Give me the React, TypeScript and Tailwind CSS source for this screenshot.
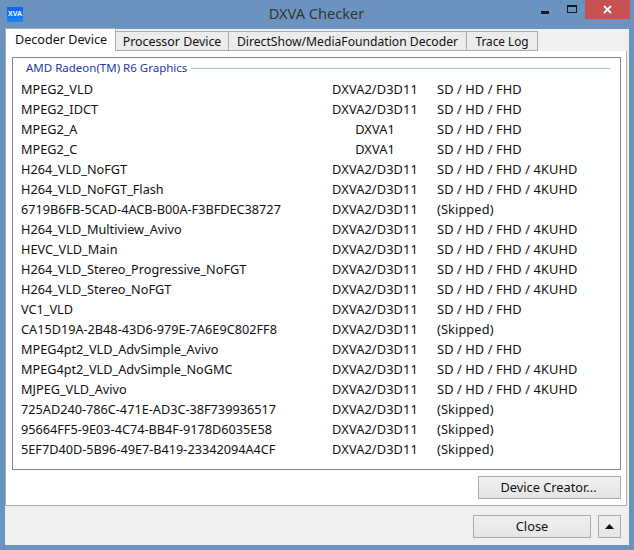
const rows: [string, string, string][] = [
  ["MPEG2_VLD", "DXVA2/D3D11", "SD / HD / FHD"],
  ["MPEG2_IDCT", "DXVA2/D3D11", "SD / HD / FHD"],
  ["MPEG2_A", "DXVA1", "SD / HD / FHD"],
  ["MPEG2_C", "DXVA1", "SD / HD / FHD"],
  ["H264_VLD_NoFGT", "DXVA2/D3D11", "SD / HD / FHD / 4KUHD"],
  ["H264_VLD_NoFGT_Flash", "DXVA2/D3D11", "SD / HD / FHD / 4KUHD"],
  ["6719B6FB-5CAD-4ACB-B00A-F3BFDEC38727", "DXVA2/D3D11", "(Skipped)"],
  ["H264_VLD_Multiview_Avivo", "DXVA2/D3D11", "SD / HD / FHD / 4KUHD"],
  ["HEVC_VLD_Main", "DXVA2/D3D11", "SD / HD / FHD / 4KUHD"],
  ["H264_VLD_Stereo_Progressive_NoFGT", "DXVA2/D3D11", "SD / HD / FHD / 4KUHD"],
  ["H264_VLD_Stereo_NoFGT", "DXVA2/D3D11", "SD / HD / FHD / 4KUHD"],
  ["VC1_VLD", "DXVA2/D3D11", "SD / HD / FHD"],
  ["CA15D19A-2B48-43D6-979E-7A6E9C802FF8", "DXVA2/D3D11", "(Skipped)"],
  ["MPEG4pt2_VLD_AdvSimple_Avivo", "DXVA2/D3D11", "SD / HD / FHD"],
  ["MPEG4pt2_VLD_AdvSimple_NoGMC", "DXVA2/D3D11", "SD / HD / FHD / 4KUHD"],
  ["MJPEG_VLD_Avivo", "DXVA2/D3D11", "SD / HD / FHD / 4KUHD"],
  ["725AD240-786C-471E-AD3C-38F739936517", "DXVA2/D3D11", "(Skipped)"],
  ["95664FF5-9E03-4C74-BB4F-9178D6035E58", "DXVA2/D3D11", "(Skipped)"],
  ["5EF7D40D-5B96-49E7-B419-23342094A4CF", "DXVA2/D3D11", "(Skipped)"],
];

const tabs = [
  { label: "Processor Device", cls: "w-[113px] text-[12.4px] leading-[19px]" },
  { label: "DirectShow/MediaFoundation Decoder", cls: "w-[238px] text-[12.15px] leading-[20px]" },
  { label: "Trace Log", cls: "w-[71px] text-[11.8px] leading-[19px]" },
];

export default function App() {
  return (
    <div className="w-[634px] h-[550px] bg-[#6a94bf] flex flex-col overflow-hidden font-['Noto_Sans','Open_Sans',sans-serif] text-[12.8px] text-[#111]">
      <div className="h-[29px] flex items-center relative shrink-0">
        <div className="ml-[7px] mt-[-1px] w-4 h-[15px] bg-gradient-to-b from-[#1a5cf0] to-[#1488f0] text-white text-[7px] font-bold flex items-center justify-center font-['Liberation_Sans',sans-serif]">XVA</div>
        <div className="flex-1 text-center text-[14.6px] text-[#333] mt-[-1px] pr-[24px]">DXVA Checker</div>
        <div className="absolute right-[4px] top-0 flex items-start">
          <div className="w-[27px] h-[20px] flex items-center justify-center"><div className="w-[8px] h-[3px] bg-[#1a1a1a] mt-[4px]" /></div>
          <div className="w-[27px] h-[20px] flex items-center justify-center"><div className="w-[10px] h-[8px] border border-[#1a1a1a] border-t-2 mt-[-2px]" /></div>
          <div className="w-[45px] h-[19px] bg-[#c75050] flex items-center justify-center">
            <svg width="9" height="9" viewBox="0 0 9 9"><path d="M1 1l7 7M8 1l-7 7" stroke="#fff" strokeWidth="1.8" /></svg>
          </div>
        </div>
      </div>

      <div className="mx-[5px] w-[624px] h-[516px] bg-[#f0f0f0] flex flex-col">
        <div className="flex h-[22px] items-end relative z-10">
          <div className="w-[111px] h-[23px] bg-white border border-[#acacac] border-b-0 pl-[9px] pt-[2px] leading-[18px] text-[12.6px]">Decoder Device</div>
          {tabs.map((t) => (
            <div key={t.label} className={`h-[20px] bg-[#ececec] border border-[#acacac] border-l-0 text-center whitespace-nowrap ${t.cls}`}>{t.label}</div>
          ))}
        </div>
        <div className="w-[622px] h-[455px] bg-white border border-[#acacac] border-t-0 flex flex-col pl-[6px] pr-[5px] pt-[6px]">
          <div className="h-[413px] border border-[#828790] flex flex-col">
            <div className="h-[22px] flex items-center pl-[13px] pr-[10px] gap-[4px] shrink-0 pb-[2px]">
              <span className="text-[#1a3aa8] whitespace-nowrap text-[11.5px]">AMD Radeon(TM) R6 Graphics</span>
              <div className="flex-1 h-px bg-[#a5bfdf]" />
            </div>
            <div className="flex flex-col">
              {rows.map((r) => (
                <div key={r[0]} className="h-5 flex items-center pl-[8px] whitespace-nowrap">
                  <span className="w-[300px] text-[12.7px]">{r[0]}</span>
                  <span className="w-[108px] text-center tracking-[0.1px]">{r[1]}</span>
                  <span className="pl-[8px] tracking-[0.1px]">{r[2]}</span>
                </div>
              ))}
            </div>
          </div>
          <div className="flex justify-end mt-[6px]">
            <div className="w-[143px] h-[23px] bg-gradient-to-b from-[#f0f0f0] to-[#e5e5e5] border border-[#acacac] text-center leading-[21px] pr-[2px]">Device Creator...</div>
          </div>
        </div>
        <div className="flex-1 flex justify-end items-start pt-[9px] pr-[8px] gap-[7px]">
          <div className="w-[118px] h-[23px] bg-gradient-to-b from-[#f0f0f0] to-[#e5e5e5] border border-[#acacac] text-center leading-[21px]">Close</div>
          <div className="w-[23px] h-[23px] bg-gradient-to-b from-[#f0f0f0] to-[#e5e5e5] border border-[#acacac] flex items-center justify-center">
            <svg width="9" height="5" viewBox="0 0 9 5"><path d="M4.5 0L9 5H0z" fill="#111" /></svg>
          </div>
        </div>
      </div>
    </div>
  );
}
